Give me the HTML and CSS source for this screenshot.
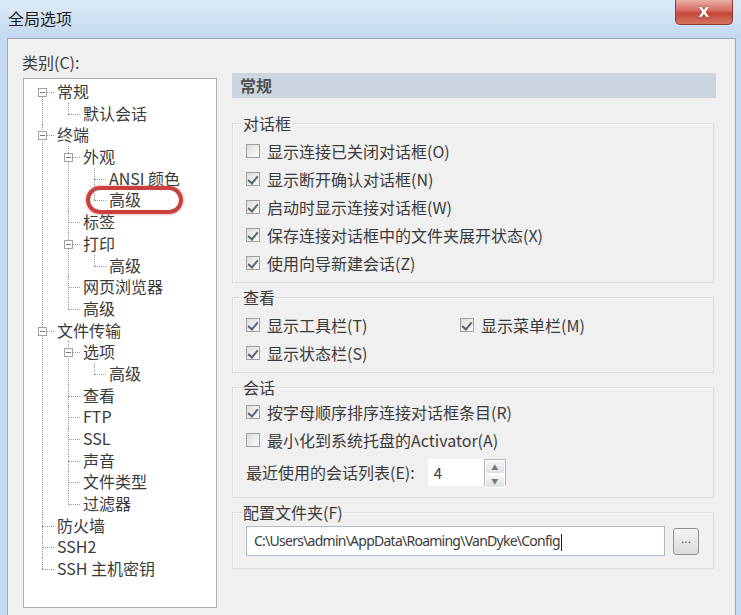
FILE: index.html
```html
<!DOCTYPE html>
<html lang="zh-CN">
<head>
    <meta charset="UTF-8">
    <title>全局选项</title>
    <link rel="stylesheet" href="styles.css">
</head>
<body>
    <div class="window">
        <div class="titlebar">
            <span class="title">全局选项</span>
            <button class="close">X</button>
        </div>
        <div class="frame">
            <div class="client">
                <div class="cat-col">
                    <div class="cat-label">类别(C):</div>
                    <div class="tree">
                        <ul>
                            <li><span class="toggle"></span><span class="node">常规</span>
                                <ul>
                                    <li><span class="node">默认会话</span></li>
                                </ul>
                            </li>
                            <li><span class="toggle"></span><span class="node">终端</span>
                                <ul>
                                    <li><span class="toggle"></span><span class="node">外观</span>
                                        <ul>
                                            <li><span class="node">ANSI 颜色</span></li>
                                            <li><span class="node marked">高级<span class="mark"></span></span></li>
                                        </ul>
                                    </li>
                                    <li><span class="node">标签</span></li>
                                    <li><span class="toggle"></span><span class="node">打印</span>
                                        <ul>
                                            <li><span class="node">高级</span></li>
                                        </ul>
                                    </li>
                                    <li><span class="node">网页浏览器</span></li>
                                    <li><span class="node">高级</span></li>
                                </ul>
                            </li>
                            <li><span class="toggle"></span><span class="node">文件传输</span>
                                <ul>
                                    <li><span class="toggle"></span><span class="node">选项</span>
                                        <ul>
                                            <li><span class="node">高级</span></li>
                                        </ul>
                                    </li>
                                    <li><span class="node">查看</span></li>
                                    <li><span class="node">FTP</span></li>
                                    <li><span class="node">SSL</span></li>
                                    <li><span class="node">声音</span></li>
                                    <li><span class="node">文件类型</span></li>
                                    <li><span class="node">过滤器</span></li>
                                </ul>
                            </li>
                            <li><span class="node">防火墙</span></li>
                            <li><span class="node">SSH2</span></li>
                            <li><span class="node">SSH 主机密钥</span></li>
                        </ul>
                    </div>
                </div>

                <div class="page-col">
                    <div class="page-header">常规</div>

                    <fieldset class="group">
                        <legend>对话框</legend>
                        <label class="check"><span class="box"></span>显示连接已关闭对话框(O)</label>
                        <label class="check"><span class="box on"></span>显示断开确认对话框(N)</label>
                        <label class="check"><span class="box on"></span>启动时显示连接对话框(W)</label>
                        <label class="check"><span class="box on"></span>保存连接对话框中的文件夹展开状态(X)</label>
                        <label class="check"><span class="box on"></span>使用向导新建会话(Z)</label>
                    </fieldset>

                    <fieldset class="group">
                        <legend>查看</legend>
                        <div class="two-col">
                            <label class="check"><span class="box on"></span>显示工具栏(T)</label>
                            <label class="check"><span class="box on"></span>显示菜单栏(M)</label>
                            <label class="check"><span class="box on"></span>显示状态栏(S)</label>
                        </div>
                    </fieldset>

                    <fieldset class="group session">
                        <legend>会话</legend>
                        <label class="check"><span class="box on"></span>按字母顺序排序连接对话框条目(R)</label>
                        <label class="check"><span class="box"></span>最小化到系统托盘的Activator(A)</label>
                        <div class="spin-row">
                            <span>最近使用的会话列表(E):</span>
                            <span class="spin">
                                <span class="spin-field">4</span>
                                <span class="spin-btns">
                                    <span class="spin-btn">&#9650;</span>
                                    <span class="spin-btn">&#9660;</span>
                                </span>
                            </span>
                        </div>
                    </fieldset>

                    <fieldset class="group">
                        <legend>配置文件夹(F)</legend>
                        <div class="path-row">
                            <div class="path-input">C:\Users\admin\AppData\Roaming\VanDyke\Config<span class="caret"></span></div>
                            <button class="browse">...</button>
                        </div>
                    </fieldset>
                </div>
            </div>
        </div>
    </div>
</body>
</html>
```

FILE: styles.css
```css
* {
    box-sizing: border-box;
}
body {
    margin: 0;
    width: 741px;
    height: 615px;
    overflow: hidden;
    background: #c6dbf0;
    font-family: "Noto Sans CJK SC", "Noto Sans", sans-serif;
    font-size: 16px;
    color: #3a3a3a;
}
.window {
    display: flex;
    flex-direction: column;
    height: 100%;
}

/* Title bar */
.titlebar {
    height: 38px;
    display: flex;
    justify-content: space-between;
    align-items: flex-start;
    background: linear-gradient(#dceaf7, #c3d9ef);
    padding: 0 8px;
}
.title {
    line-height: 36px;
    font-size: 16px;
    color: #1e1e1e;
}
.close {
    width: 58px;
    height: 25px;
    border: 1px solid #8c3b33;
    border-top: none;
    border-radius: 0 0 5px 5px;
    background: linear-gradient(#eab0a6, #d66a5c 45%, #c3463a 55%, #d4775f);
    color: #fff;
    font-family: "DejaVu Sans", sans-serif;
    font-weight: bold;
    font-size: 14px;
    padding: 0;
    text-shadow: 0 0 2px #6a1f18;
}

/* Window body */
.frame {
    flex: 1;
    padding: 0 5px 0 7px;
}
.client {
    height: 100%;
    background: #f0f0f0;
    border: 1px solid #97aac2;
    border-bottom: none;
    display: flex;
    gap: 15px;
    padding: 0 19px 0 15px;
}

/* Category tree */
.cat-col {
    width: 194px;
    display: flex;
    flex-direction: column;
}
.cat-label {
    margin: 12px 0 5px -1px;
    line-height: 22px;
}
.tree {
    height: 530px;
    background: #fff;
    border: 1px solid #a9adb2;
    padding-top: 2px;
}
.tree ul {
    list-style: none;
    margin: 0 0 0 11px;
    padding: 0;
}
.tree > ul {
    margin-left: 18px;
}
.tree li {
    position: relative;
    padding-left: 15px;
}
.tree li::before {
    content: "";
    position: absolute;
    left: 0;
    top: 11px;
    width: 12px;
    border-top: 1px dotted #9a9a9a;
}
.tree li::after {
    content: "";
    position: absolute;
    left: 0;
    top: 0;
    bottom: 0;
    border-left: 1px dotted #9a9a9a;
}
.tree li:last-child::after {
    bottom: auto;
    height: 11px;
}
.tree > ul > li:first-child::after {
    top: 11px;
}
.node {
    display: block;
    height: 21.7px;
    line-height: 21.7px;
    white-space: nowrap;
}
.toggle {
    position: absolute;
    z-index: 1;
    left: -4px;
    top: 7px;
    width: 9px;
    height: 9px;
    border: 1px solid #a2a2a2;
    background: #fff;
}
.toggle::before {
    content: "";
    position: absolute;
    left: 1px;
    top: 3px;
    width: 5px;
    border-top: 1px solid #7a7a7a;
}
.marked {
    position: relative;
    width: max-content;
}
.mark {
    position: absolute;
    left: -23px;
    top: -3px;
    width: 97px;
    height: 28px;
    border: 4px solid #c9403c;
    border-radius: 14px;
    box-shadow: 0 0 3px rgba(200, 60, 60, 0.6);
}

/* Options page */
.page-col {
    width: 484px;
    padding-top: 34px;
    display: flex;
    flex-direction: column;
    gap: 4px;
}
.page-header {
    height: 25px;
    line-height: 25px;
    background: #ccd6e1;
    padding-left: 8px;
    font-weight: bold;
    color: #505050;
    margin-bottom: 11px;
}
.group {
    margin: 0 2px 0 0;
    border: 1px solid #dedede;
    box-shadow: inset 1px 1px 0 #fafafa;
    padding: 4px 14px 5px 13px;
    min-width: 0;
}
.group.session {
    padding-top: 1px;
    padding-bottom: 7px;
}
.group legend {
    padding: 0;
    margin-left: -3px;
    line-height: 20px;
}
.check {
    display: flex;
    align-items: center;
    gap: 7px;
    height: 28px;
    white-space: nowrap;
}
.box {
    width: 14px;
    height: 14px;
    border: 1px solid #a0a0a0;
    background: linear-gradient(135deg, #dcdcdc, #fbfbfb);
    position: relative;
    flex: none;
}
.box.on::after {
    content: "";
    position: absolute;
    left: 3px;
    top: 1px;
    width: 4px;
    height: 8px;
    border: solid #5a6674;
    border-width: 0 2px 2px 0;
    transform: rotate(40deg);
}
.two-col {
    display: grid;
    grid-template-columns: 214px auto;
}
.spin-row {
    display: flex;
    align-items: center;
    gap: 13px;
    height: 36px;
}
.spin {
    display: flex;
    height: 27px;
}
.spin-field {
    width: 56px;
    background: #fff;
    line-height: 27px;
    padding-left: 6px;
    font-size: 15px;
}
.spin-btns {
    width: 22px;
    display: flex;
    flex-direction: column;
    border: 1px solid #b5b5b5;
    background: #e9e9e9;
}
.spin-btn {
    flex: 1;
    font-size: 7px;
    line-height: 12px;
    text-align: center;
    color: #6c7886;
    background: linear-gradient(#f6f6f6, #e0e0e0);
    border: 1px solid #fff;
}
.path-row {
    display: flex;
    align-items: center;
    gap: 8px;
    margin-bottom: 7px;
}
.path-input {
    flex: 1;
    height: 30px;
    border: 1px solid #a9bccf;
    background: #fff;
    line-height: 28px;
    padding-left: 7px;
    font-family: "Noto Sans", sans-serif;
    font-size: 14px;
    letter-spacing: -0.75px;
    color: #3a3a3a;
    white-space: nowrap;
    overflow: hidden;
}
.caret {
    display: inline-block;
    width: 1px;
    height: 17px;
    margin-left: 1px;
    background: #222;
    vertical-align: middle;
}
.browse {
    width: 26px;
    height: 27px;
    border: 1px solid #8f9090;
    border-radius: 3px;
    background: linear-gradient(#f4f4f4, #dadada);
    padding: 0 0 4px;
    font-size: 12px;
    color: #444;
}
```
